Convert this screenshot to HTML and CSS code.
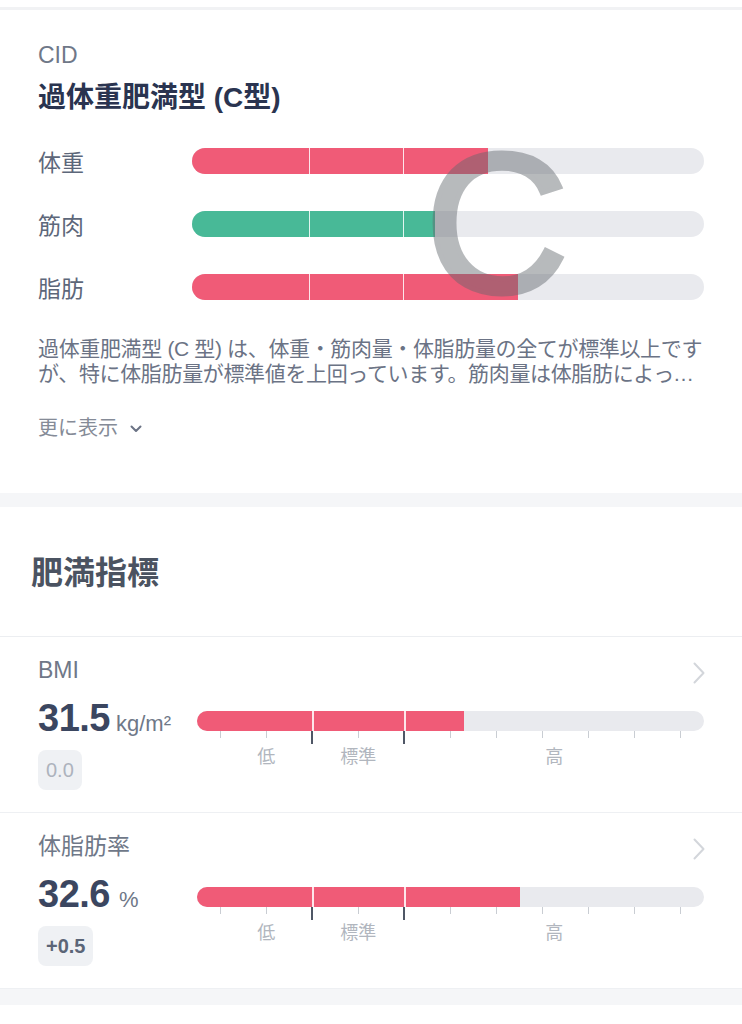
FILE: index.html
```html
<!DOCTYPE html>
<html lang="ja">
<head>
<meta charset="utf-8">
<title>CID</title>
<link rel="stylesheet" href="styles.css">
</head>
<body>
<div class="top-line"></div>

<section class="cid">
  <div class="cid-label">CID</div>
  <h1 class="cid-title">過体重肥満型 (C型)</h1>
  <div class="cid-rows">
    <div class="cid-row">
      <span class="row-label">体重</span>
      <div class="track track-lg">
        <div class="fill red" style="width:57.8%"></div>
        <i class="div d1"></i><i class="div d2"></i>
      </div>
    </div>
    <div class="cid-row">
      <span class="row-label">筋肉</span>
      <div class="track track-lg">
        <div class="fill green" style="width:47.5%"></div>
        <i class="div d1"></i><i class="div d2"></i>
      </div>
    </div>
    <div class="cid-row">
      <span class="row-label">脂肪</span>
      <div class="track track-lg">
        <div class="fill red" style="width:63.7%"></div>
        <i class="div d1"></i><i class="div d2"></i>
      </div>
    </div>
    <span class="big-c">C</span>
  </div>
  <p class="cid-desc">過体重肥満型 (C 型) は、体重・筋肉量・体脂肪量の全てが標準以上ですが、特に体脂肪量が標準値を上回っています。筋肉量は体脂肪によって支えられていますが、体脂肪を減らすことをおすすめします。</p>
  <div class="more">更に表示
    <svg class="more-icon" width="12" height="8" viewBox="0 0 12 8"><path d="M1.5 1.5 L6 6 L10.5 1.5" fill="none" stroke="#6b7385" stroke-width="2" stroke-linecap="round" stroke-linejoin="round"/></svg>
  </div>
</section>

<div class="band"></div>

<section class="obesity">
  <h2 class="obesity-title">肥満指標</h2>
</section>

<div class="metric">
  <div class="metric-head">
    <span class="metric-label">BMI</span>
    <svg class="chev" width="12" height="22" viewBox="0 0 12 22"><path d="M1.5 1.5 L10.5 11 L1.5 20.5" fill="none" stroke="#d3d6db" stroke-width="2" stroke-linecap="round" stroke-linejoin="round"/></svg>
  </div>
  <div class="metric-body">
    <div class="metric-left">
      <div class="value"><span class="num">31.5</span><span class="unit">kg/m²</span></div>
      <span class="badge zero">0.0</span>
    </div>
    <div class="metric-right">
      <div class="track track-sm">
        <div class="fill red flat" style="width:52.7%"></div>
        <i class="div m1"></i><i class="div m2"></i>
      </div>
      <div class="ticks">
        <i></i><i></i><i class="major"></i><i></i><i class="major"></i><i></i><i></i><i></i><i></i><i></i><i></i>
      </div>
      <div class="scale">
        <span class="s-low">低</span><span class="s-std">標準</span><span class="s-high">高</span>
      </div>
    </div>
  </div>
</div>

<div class="metric">
  <div class="metric-head">
    <span class="metric-label">体脂肪率</span>
    <svg class="chev" width="12" height="22" viewBox="0 0 12 22"><path d="M1.5 1.5 L10.5 11 L1.5 20.5" fill="none" stroke="#d3d6db" stroke-width="2" stroke-linecap="round" stroke-linejoin="round"/></svg>
  </div>
  <div class="metric-body">
    <div class="metric-left">
      <div class="value"><span class="num">32.6</span><span class="unit pct">%</span></div>
      <span class="badge plus">+0.5</span>
    </div>
    <div class="metric-right">
      <div class="track track-sm">
        <div class="fill red flat" style="width:63.7%"></div>
        <i class="div m1"></i><i class="div m2"></i>
      </div>
      <div class="ticks">
        <i></i><i></i><i class="major"></i><i></i><i class="major"></i><i></i><i></i><i></i><i></i><i></i><i></i>
      </div>
      <div class="scale">
        <span class="s-low">低</span><span class="s-std">標準</span><span class="s-high">高</span>
      </div>
    </div>
  </div>
</div>

<div class="band band-bottom"></div>
</body>
</html>
```

FILE: styles.css
```css
* { box-sizing: border-box; }
html, body { margin: 0; padding: 0; background: #ffffff; }
body {
  font-family: "Liberation Sans", "Noto Sans CJK JP", sans-serif;
  color: #6b7385;
  width: 742px;
  overflow: hidden;
}

.top-line {
  margin-top: 7px;
  height: 3px;
  background: #f1f2f4;
}

/* CID section */
.cid {
  padding: 30px 38px 51px 38px;
}
.cid-label {
  font-size: 23px;
  line-height: 30px;
  color: #6f7888;
}
.cid-title {
  margin: 10px 0 0 0;
  font-size: 28px;
  line-height: 36px;
  font-weight: 700;
  color: #2a3450;
}
.cid-rows {
  position: relative;
  margin-top: 13px;
  display: flex;
  flex-direction: column;
}
.cid-row {
  height: 63px;
  display: flex;
  align-items: center;
}
.row-label {
  width: 154px;
  flex: none;
  font-size: 23px;
  color: #5d677a;
}
.track {
  position: relative;
  flex: 1;
  background: #e9eaee;
  overflow: hidden;
}
.track-lg { height: 26px; border-radius: 13px; }
.track-sm { height: 20px; border-radius: 10px; }
.fill { height: 100%; }
.fill.red { background: #f05b77; }
.fill.green { background: #48b997; }
.div {
  position: absolute;
  top: 0;
  bottom: 0;
  width: 1.5px;
  background: rgba(255,255,255,0.85);
}
.d1 { left: 22.85%; }
.d2 { left: 41.2%; }
.m1 { left: 22.73%; }
.m2 { left: 40.9%; }

.big-c {
  position: absolute;
  left: 387px;
  top: -5px;
  font-family: "Liberation Sans", sans-serif;
  font-weight: 400;
  font-size: 199px;
  line-height: 1;
  color: #62676d;
  -webkit-text-stroke: 5px #62676d;
  opacity: 0.45;
  pointer-events: none;
}

.cid-desc {
  margin: 18px 0 0 0;
  font-size: 21px;
  line-height: 25px;
  letter-spacing: -0.35px;
  color: #6b7385;
  display: -webkit-box;
  -webkit-line-clamp: 2;
  -webkit-box-orient: vertical;
  overflow: hidden;
}
.more {
  margin-top: 28px;
  font-size: 20px;
  line-height: 28px;
  color: #858b97;
  display: flex;
  align-items: center;
  gap: 12px;
}
.more-icon { margin-top: 2px; }

.band {
  height: 14px;
  background: #f5f6f8;
}
.band-bottom {
  height: 16px;
}

/* obesity */
.obesity {
  padding: 46px 31px 43px 31px;
  border-bottom: 1px solid #eceef1;
}
.obesity-title {
  margin: 0;
  font-size: 32px;
  line-height: 40px;
  font-weight: 700;
  color: #4b5361;
}

/* metrics */
.metric {
  padding: 19px 38px 22px 38px;
  border-bottom: 1px solid #eef0f3;
}
.metric:last-of-type { border-bottom: none; }
.metric-head {
  display: flex;
  align-items: center;
  justify-content: space-between;
  height: 28px;
}
.metric-label {
  font-size: 23px;
  line-height: 28px;
  color: #6f7888;
}
.chev { margin-right: -1px; margin-top: 6px; }

.metric-body {
  margin-top: 14px;
  display: flex;
}
.metric-left {
  width: 159px;
  flex: none;
  display: flex;
  flex-direction: column;
  align-items: flex-start;
}
.value {
  height: 40px;
  display: flex;
  align-items: baseline;
  gap: 6px;
  line-height: 40px;
}
.num {
  font-size: 38px;
  font-weight: 700;
  color: #3b4660;
  letter-spacing: -0.5px;
}
.unit {
  font-size: 22px;
  color: #6f7888;
}
.unit.pct { margin-left: 3px; }
.badge {
  margin-top: 12px;
  height: 40px;
  line-height: 40px;
  padding: 0 8px;
  border-radius: 8px;
  background: #eff1f4;
  font-size: 20px;
}
.badge.zero { color: #adb3bd; }
.badge.plus { color: #5b6577; font-weight: 700; }

.metric-right {
  flex: 1;
  padding-top: 13px;
}
.ticks {
  display: grid;
  grid-template-columns: repeat(11, 1fr);
  height: 13px;
}
.ticks i {
  justify-self: center;
  width: 1px;
  height: 7px;
  background: #c9cdd3;
}
.ticks i.major {
  width: 2px;
  height: 13px;
  background: #4f5766;
}
.scale {
  display: grid;
  grid-template-columns: repeat(44, 1fr);
  margin-top: 3px;
  font-size: 18px;
  line-height: 20px;
  color: #b1b6be;
}
.scale span { grid-row: 1; text-align: center; white-space: nowrap; }
.s-low { grid-column: 1 / 13; }
.s-std { grid-column: 11 / 19; }
.s-high { grid-column: 19 / 45; }
```
